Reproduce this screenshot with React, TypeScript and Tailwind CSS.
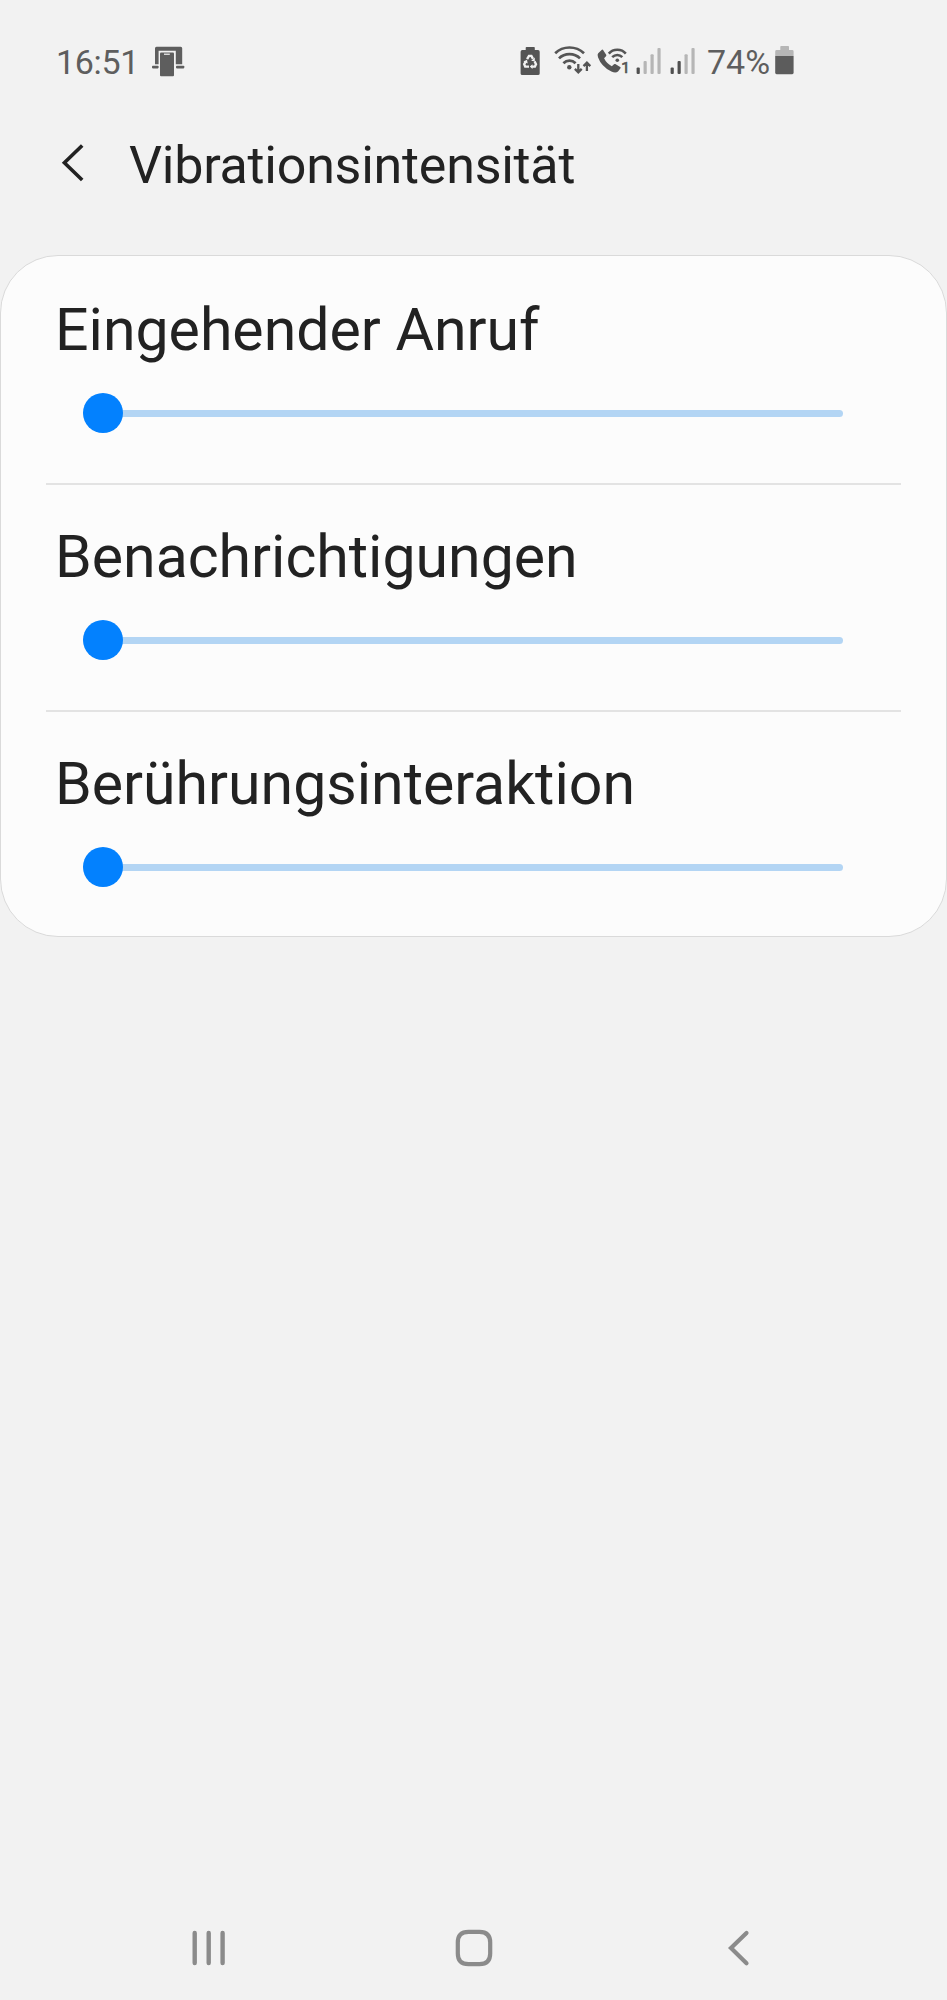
import React, { useState } from "react";

interface VibrationSetting {
  id: string;
  label: string;
  value: number;
}

const initialSettings: VibrationSetting[] = [
  { id: "call", label: "Eingehender Anruf", value: 0 },
  { id: "notification", label: "Benachrichtigungen", value: 0 },
  { id: "touch", label: "Berührungsinteraktion", value: 0 },
];

function DeviceIcon() {
  return (
    <svg width="33" height="32" viewBox="0 0 33 32" fill="#5e5e5e" className="ml-[16px]">
      <path d="M3 19.3V3.2Q3 1.7 4.5 1.7H28.7Q30.2 1.7 30.2 3.2V19.3H23.8V5.8H6.6V19.3Z" />
      <rect x="0" y="20.8" width="6.6" height="2.6" rx="0.8" />
      <rect x="24" y="20.8" width="8.3" height="2.6" rx="0.8" />
      <rect x="8" y="7.4" width="14" height="23.8" rx="1" />
      <path d="M12 8.5H17.8V10H12Z" fill="#d8d8d8" />
    </svg>
  );
}

function BatterySaverIcon() {
  return (
    <svg width="20" height="32" viewBox="0 0 20 32" fill="#555555">
      <path d="M5.7 5V2.8Q5.7 2 6.5 2H14Q14.8 2 14.8 2.8V5H18Q19.7 5 19.7 6.7V28.4Q19.7 30 18 30H2.3Q0.6 30 0.6 28.4V6.7Q0.6 5 2.3 5Z" />
      <g fill="none" stroke="#f2f2f2" strokeWidth="2.4">
        <path d="M7.1 14.2L9 10.9H11.4L13 13.8" />
        <path d="M14.5 16.3L16 19.2L14.9 21.6H11.6" />
        <path d="M9 21.6H5.2L4.2 19.2L5.9 16.4" />
      </g>
      <path d="M14.8 12.4V16H11.1ZM12.5 19.2V24L9.8 21.6ZM3.4 16.4L7 14.8L7.7 18.6Z" fill="#f2f2f2" />
    </svg>
  );
}

function WifiIcon() {
  return (
    <svg width="38" height="32" viewBox="0 0 38 32" fill="none" stroke="#555555" strokeWidth="2.7" className="ml-[14px]">
      <path d="M1.2 8.2Q7 2.5 15.5 2.5T30 8.2" />
      <path d="M5 13.4Q9.2 9.2 15.5 9.2T26 13.4" />
      <path d="M9.4 18.2Q12 15.6 15.5 15.6T21.6 18.2" />
      <circle cx="15.3" cy="22.3" r="2.2" fill="#555555" stroke="none" />
      <path d="M24.3 19V27M20.9 23.9L24.3 27.3L27.7 23.9M32.9 26V18M29.5 21.1L32.9 17.7L36.3 21.1" strokeWidth="2.3" />
    </svg>
  );
}

function WifiCallIcon() {
  return (
    <svg width="32" height="32" viewBox="0 0 32 32" fill="#555555" className="ml-[5px]">
      <path d="M1.2 8.2L4.9 4.8Q5.6 4.3 6.1 5L9.2 9.8Q9.6 10.6 9 11.2L7.1 13.2Q9.2 18 14.8 21.2L17 19.2Q17.6 18.7 18.3 19.1L23.2 22.1Q24 22.6 23.5 23.3L21 26.5Q18.8 28.6 14.4 26.6Q4.2 21.4 1 12.2Q0.1 9.2 1.2 8.2Z" />
      <g fill="none" stroke="#555555" strokeWidth="2.5">
        <path d="M11.8 8.6Q15 4.8 20.3 4.8T28.8 8.6" />
        <path d="M15.2 12.2Q17.4 9.9 20.3 9.9T25.3 12.2" />
      </g>
      <circle cx="20.3" cy="15.2" r="1.8" />
      <text x="24.2" y="28.3" fontSize="15.5" fontFamily="Roboto, sans-serif" stroke="#555555" strokeWidth="0.7">
        1
      </text>
    </svg>
  );
}

function SignalIcon({ level, className }: { level: number; className: string }) {
  const tops = [22.5, 16, 9.3, 3];
  return (
    <svg width="25" height="32" viewBox="0 0 25 32" className={className}>
      {tops.map((top, idx) => (
        <rect
          key={idx}
          x={0.6 + idx * 6.95}
          y={top}
          width="3.2"
          height={29 - top}
          rx="1"
          fill={idx < level ? "#505050" : "#b6b6b6"}
        />
      ))}
    </svg>
  );
}

function BatteryIcon() {
  return (
    <svg width="19" height="32" viewBox="0 0 19 32" className="ml-[5px]">
      <path d="M5.3 5V1.8Q5.3 1 6.1 1H13.2Q14 1 14 1.8V5H17.2Q18.6 5 18.6 6.4V11H0.2V6.4Q0.2 5 1.6 5Z" fill="#b6b6b6" />
      <path d="M0.2 11H18.6V27.8Q18.6 29.2 17.2 29.2H1.6Q0.2 29.2 0.2 27.8Z" fill="#5c5c5c" />
    </svg>
  );
}

function StatusBar() {
  return (
    <div className="flex h-[122px] items-start pt-[45px] pl-[56px] text-[34px] leading-[34px] text-[#5e5e5e]">
      <span className="w-[80px] tracking-[-0.3px] whitespace-nowrap">16:51</span>
      <DeviceIcon />
      <div className="ml-[335px] flex items-start">
        <BatterySaverIcon />
        <WifiIcon />
        <WifiCallIcon />
        <SignalIcon level={1} className="ml-[7px]" />
        <SignalIcon level={2} className="ml-[9px]" />
        <span className="ml-[12px] w-[63px] whitespace-nowrap">74%</span>
        <BatteryIcon />
      </div>
    </div>
  );
}

interface SliderRowProps {
  setting: VibrationSetting;
  onChange: (value: number) => void;
}

function SliderRow({ setting, onChange }: SliderRowProps) {
  return (
    <div className="h-[227px] pt-[39px]">
      <h2 className="pl-[54px] text-[59px] leading-[70px] whitespace-nowrap">{setting.label}</h2>
      <div className="relative mt-[28px] ml-[82px] flex h-[40px] w-[760px] items-center">
        <div className="h-[7px] w-full rounded-full bg-[#b3d5f4]" />
        <div
          className="absolute top-0 size-[40px] rounded-full bg-[#0381fe]"
          style={{ left: setting.value * 144 }}
        />
        <input
          type="range"
          min={0}
          max={5}
          value={setting.value}
          aria-label={setting.label}
          onChange={(e) => onChange(Number(e.target.value))}
          className="absolute inset-0 w-full opacity-0"
        />
      </div>
    </div>
  );
}

export default function App() {
  const [settings, setSettings] = useState(initialSettings);

  const handleChange = (id: string, value: number) => {
    setSettings(settings.map((s) => (s.id === id ? { ...s, value } : s)));
  };

  return (
    <div className="flex h-[2000px] w-[947px] flex-col overflow-hidden bg-[#f2f2f2] font-['Roboto',sans-serif] text-[#222222]">
      <StatusBar />

      <header className="flex h-[133px] items-start pl-[60px]">
        <button aria-label="Zurück" className="mt-[20px]">
          <svg width="26" height="42" viewBox="0 0 26 42" fill="none" stroke="#222222" strokeWidth="3.6">
            <path d="M22.2 3.5L4.4 20.8L22.2 38" />
          </svg>
        </button>
        <h1 className="mt-[14px] ml-[43px] text-[52px] leading-[60px] tracking-[-0.25px] whitespace-nowrap">
          Vibrationsintensität
        </h1>
      </header>

      <main className="h-[682px] rounded-[58px] border border-[#dadada] bg-[#fcfcfc]">
        {settings.map((setting, idx) => (
          <React.Fragment key={setting.id}>
            {idx > 0 && <div className="mx-[45px] -mb-[2px] h-[2px] bg-[#e3e3e3]" />}
            <SliderRow setting={setting} onChange={(value) => handleChange(setting.id, value)} />
          </React.Fragment>
        ))}
      </main>

      {/* Android navigation */}
      <nav className="mt-auto flex h-[105px] items-center justify-between pr-[197px] pl-[192px]">
        <button aria-label="Letzte Apps">
          <svg width="34" height="38" viewBox="0 0 34 38" stroke="#8b8b8b" strokeWidth="4.4" strokeLinecap="round">
            <path d="M2.7 4V34M16.7 4V34M30.6 4V34" />
          </svg>
        </button>
        <button aria-label="Startseite" className="mr-[5px]">
          <svg width="38" height="38" viewBox="0 0 38 38" fill="none" stroke="#8b8b8b" strokeWidth="4.2">
            <path d="M13.5 2.8H24.5Q35.2 2.8 35.2 13.5V24.5Q35.2 35.2 24.5 35.2H13.5Q2.8 35.2 2.8 24.5V13.5Q2.8 2.8 13.5 2.8Z" />
          </svg>
        </button>
        <button aria-label="Zurück">
          <svg width="24" height="38" viewBox="0 0 24 38" fill="none" stroke="#8b8b8b" strokeWidth="4.2" strokeLinecap="round">
            <path d="M20.5 4L5 19L20.5 34.2" />
          </svg>
        </button>
      </nav>
    </div>
  );
}
